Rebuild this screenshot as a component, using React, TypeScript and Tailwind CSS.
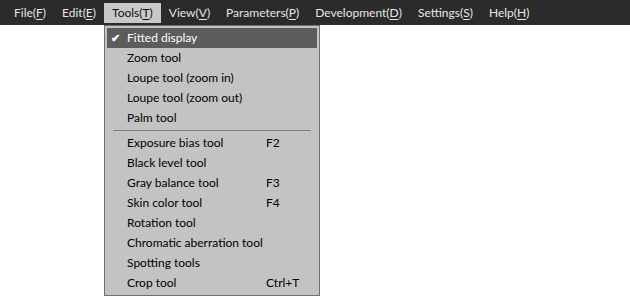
import React from 'react';

type Item = { label: string; shortcut?: string; checked?: boolean; sep?: boolean };

const menus: [string, string][] = [
  ['File', 'F'],
  ['Edit', 'E'],
  ['Tools', 'T'],
  ['View', 'V'],
  ['Parameters', 'P'],
  ['Development', 'D'],
  ['Settings', 'S'],
  ['Help', 'H'],
];

const items: Item[] = [
  { label: 'Fitted display', checked: true },
  { label: 'Zoom tool' },
  { label: 'Loupe tool (zoom in)' },
  { label: 'Loupe tool (zoom out)' },
  { label: 'Palm tool' },
  { label: '', sep: true },
  { label: 'Exposure bias tool', shortcut: 'F2' },
  { label: 'Black level tool' },
  { label: 'Gray balance tool', shortcut: 'F3' },
  { label: 'Skin color tool', shortcut: 'F4' },
  { label: 'Rotation tool' },
  { label: 'Chromatic aberration tool' },
  { label: 'Spotting tools' },
  { label: 'Crop tool', shortcut: 'Ctrl+T' },
];

const App: React.FC = () => {
  return (
    <div className="relative w-[630px] h-[297px] bg-white font-['Lato',sans-serif] text-[12px] overflow-hidden">
      <div className="h-[25px] bg-[#2b2b2b] flex items-center pl-[6px]">
        {menus.map(([name, key]) => {
          const active = name === 'Tools';
          return (
            <div
              key={name}
              className={
                active
                  ? 'h-[20px] px-2 flex items-center whitespace-nowrap bg-[#c8c8c8] text-[#111]'
                  : 'h-[20px] px-2 flex items-center whitespace-nowrap text-[#e6e6e6]'
              }
            >
              {name}(<span className="underline underline-offset-2">{key}</span>)
            </div>
          );
        })}
      </div>

      <div className="absolute left-[104px] top-[25px] w-[216px] h-[271px] bg-[#c3c3c3] border border-[#6f6f6f] p-[2px] text-black">
        {items.map((it, i) =>
          it.sep ? (
            <div key={i} className="h-[5px] flex items-center px-[6px]">
              <div className="w-full h-px bg-[#7c7c7c]" />
            </div>
          ) : (
            <div
              key={i}
              className={
                it.checked
                  ? 'h-[20px] flex items-center whitespace-nowrap bg-[#5c5c5c] text-white'
                  : 'h-[20px] flex items-center whitespace-nowrap'
              }
            >
              <span className="w-[20px] pl-[4px] text-[11px] font-bold">{it.checked ? '✔' : ''}</span>
              <span className="w-[139px]">{it.label}</span>
              <span>{it.shortcut}</span>
            </div>
          )
        )}
      </div>
    </div>
  );
};

export default App;
